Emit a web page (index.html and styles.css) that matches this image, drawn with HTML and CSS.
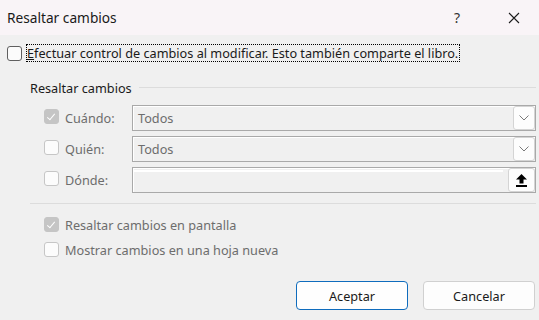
FILE: index.html
```html
<!DOCTYPE html>
<html lang="es">
<head>
    <meta charset="UTF-8">
    <title>Resaltar cambios</title>
    <link rel="stylesheet" href="styles.css">
</head>
<body>
    <div class="dialog">
        <header class="titlebar">
            <span class="title">Resaltar cambios</span>
            <span class="help">?</span>
            <span class="close">
                <svg width="12" height="12" viewBox="0 0 12 12"><path d="M1 1 L11 11 M11 1 L1 11" stroke="#1b1b1b" stroke-width="1.1" fill="none"/></svg>
            </span>
        </header>

        <main class="content">
            <div class="track">
                <span class="box"></span>
                <span class="focus"><u>E</u>fectuar control de cambios al modificar. Esto también comparte el libro.</span>
            </div>

            <section class="group">
                <div class="group-head">
                    <span>Resaltar cambios</span>
                    <span class="rule"></span>
                </div>

                <div class="fields">
                    <div class="field">
                        <span class="box off checked"></span>
                        <span class="lbl">Cuándo:</span>
                        <div class="select">
                            <span>Todos</span>
                            <span class="drop">
                                <svg width="10" height="6" viewBox="0 0 10 6"><path d="M0.5 0.5 L5 5 L9.5 0.5" stroke="#7a7a7a" stroke-width="1" fill="none"/></svg>
                            </span>
                        </div>
                    </div>
                    <div class="field">
                        <span class="box off"></span>
                        <span class="lbl">Quién:</span>
                        <div class="select">
                            <span>Todos</span>
                            <span class="drop">
                                <svg width="10" height="6" viewBox="0 0 10 6"><path d="M0.5 0.5 L5 5 L9.5 0.5" stroke="#7a7a7a" stroke-width="1" fill="none"/></svg>
                            </span>
                        </div>
                    </div>
                    <div class="field">
                        <span class="box off"></span>
                        <span class="lbl">Dónde:</span>
                        <div class="select range">
                            <span class="range-fill"></span>
                            <span class="pick">
                                <svg width="11" height="13" viewBox="0 0 11 13"><path d="M5.5 0 L11 5.5 L7.5 5.5 L7.5 9.5 L3.5 9.5 L3.5 5.5 L0 5.5 Z" fill="#000"/><rect x="0" y="11" width="11" height="2" fill="#000"/></svg>
                            </span>
                        </div>
                    </div>
                </div>

                <div class="sep"></div>

                <div class="options">
                    <div class="option">
                        <span class="box off checked"></span>
                        <span>Resaltar cambios en pantalla</span>
                    </div>
                    <div class="option">
                        <span class="box off"></span>
                        <span>Mostrar cambios en una hoja nueva</span>
                    </div>
                </div>
            </section>

            <div class="buttons">
                <button class="btn primary">Aceptar</button>
                <button class="btn">Cancelar</button>
            </div>
        </main>
    </div>
</body>
</html>
```

FILE: styles.css
```css
* {
    margin: 0;
    padding: 0;
    box-sizing: border-box;
}

body {
    width: 539px;
    height: 320px;
    overflow: hidden;
    background: #f0f0f0;
    font-family: 'Noto Sans', sans-serif;
    font-size: 12.7px;
    color: #1a1a1a;
}

.titlebar {
    height: 35px;
    background: #f9f4f7;
    display: flex;
    align-items: center;
}

.title {
    padding-left: 7px;
    font-size: 13.7px;
}

.help {
    margin-left: auto;
    width: 20px;
    text-align: center;
    font-size: 14px;
    color: #333;
}

.close {
    width: 20px;
    margin-left: 37px;
    margin-right: 15px;
    display: flex;
    justify-content: center;
}

.content {
    padding: 9px 3px 0 7px;
}

.track {
    display: flex;
    align-items: center;
    height: 18px;
}

.track .box {
    margin-right: 4px;
}

.focus {
    border: 1px dotted #000;
    line-height: 16px;
    padding: 0 1px 0 0;
}

.box {
    width: 15px;
    height: 15px;
    flex: none;
    border: 1px solid #5f5f5f;
    border-radius: 3px;
    background: #fbfbfb;
    position: relative;
}

.box.off {
    border-color: #c6c6c6;
    background: #fcfcfc;
}

.box.checked {
    background: #c5c5c5;
    border-color: #c5c5c5;
}

.box.checked::after {
    content: '';
    position: absolute;
    left: 4px;
    top: 2px;
    width: 3px;
    height: 7px;
    border: solid #fff;
    border-width: 0 1px 1px 0;
    transform: rotate(40deg);
}

.group {
    margin-top: 16px;
    margin-left: 23px;
}

.group-head {
    height: 20px;
    display: flex;
    align-items: center;
}

.rule {
    flex: 1;
    height: 1px;
    background: #dcdcdc;
    margin-left: 7px;
    margin-top: -2px;
}

.fields {
    margin-top: 7px;
    padding-left: 14px;
    display: grid;
    gap: 5px;
}

.field {
    display: flex;
    align-items: center;
    height: 26px;
    color: #6d6d6d;
}

.field .box {
    margin-right: 6px;
    margin-top: -3px;
}

.lbl {
    width: 67px;
}

.select {
    flex: 1;
    height: 26px;
    border: 1px solid #a9a9a9;
    background: #f0f0f0;
    box-shadow: inset 1px 1px 0 #fff;
    display: flex;
    align-items: center;
    padding-left: 5px;
}

.drop {
    margin-left: auto;
    width: 22px;
    height: 24px;
    background: #fdfdfd;
    border: 1px solid #d4d4d4;
    border-radius: 3px;
    display: flex;
    align-items: center;
    justify-content: center;
}

.range {
    padding-left: 1px;
}

.range-fill {
    flex: 1;
    height: 22px;
    margin-top: 1px;
    border-top: 2px solid #fff;
}

.pick {
    width: 27px;
    height: 24px;
    margin-left: 5px;
    background: #fdfdfd;
    border: 1px solid #d4d4d4;
    border-radius: 3px;
    display: flex;
    align-items: center;
    justify-content: center;
}

.sep {
    margin-top: 10px;
    height: 1px;
    background: #dcdcdc;
}

.options {
    margin-top: 8px;
    padding-left: 14px;
    color: #6d6d6d;
}

.option {
    height: 25px;
    display: flex;
    align-items: center;
    gap: 6px;
}

.buttons {
    margin-top: 19px;
    margin-right: 1px;
    display: flex;
    justify-content: flex-end;
    gap: 15px;
}

.btn {
    width: 112px;
    height: 29px;
    background: #fdfdfd;
    border: 1px solid #d0d0d0;
    border-radius: 4px;
    font-family: 'Noto Sans', sans-serif;
    font-size: 12.7px;
    color: #1a1a1a;
}

.btn.primary {
    background: #fefefe;
    border-color: #0f6cbd;
}
```
